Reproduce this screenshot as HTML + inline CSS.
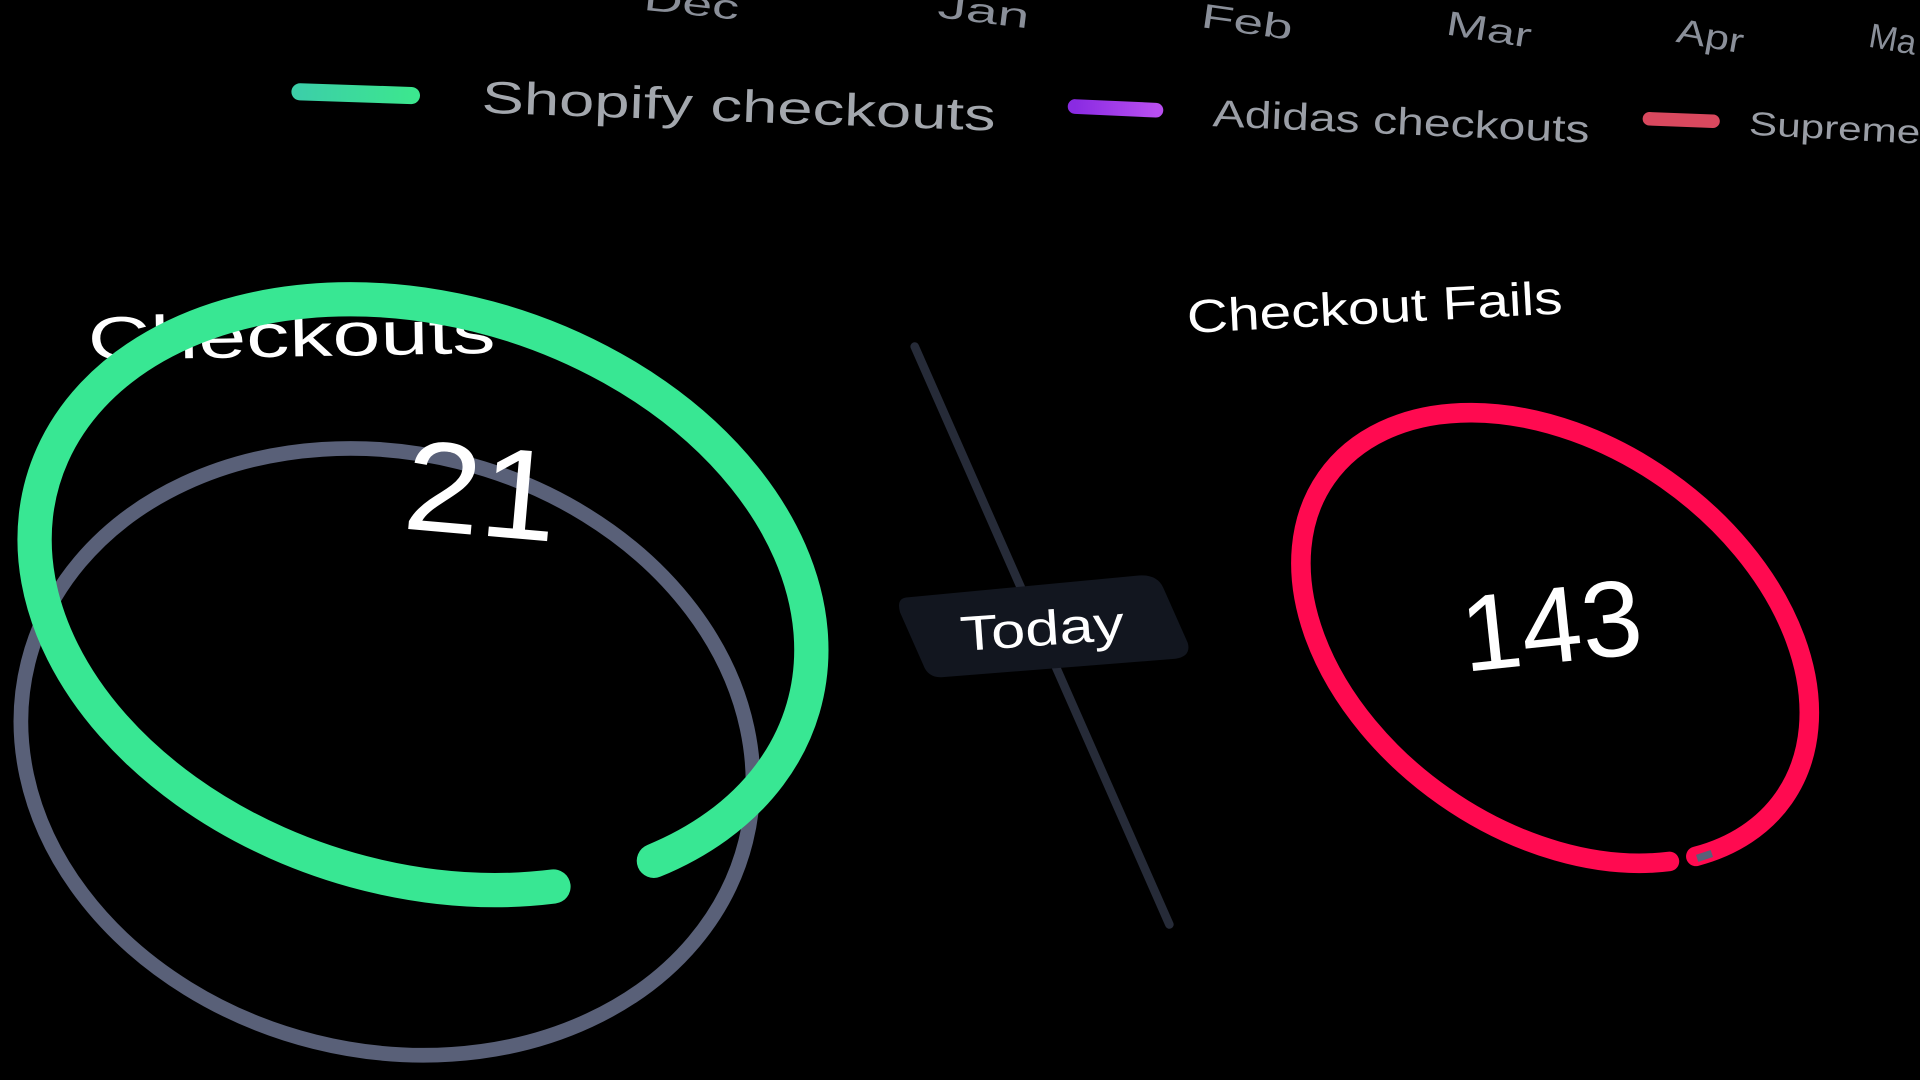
<!DOCTYPE html>
<html><head><meta charset="utf-8"><style>
html,body{margin:0;padding:0;background:#000;width:1920px;height:1080px;overflow:hidden}
svg{display:block}
text{font-family:"Liberation Sans",sans-serif}
</style></head><body>
<svg width="1920" height="1080" viewBox="0 0 1568 882" xmlns="http://www.w3.org/2000/svg">
<defs>
<linearGradient id="gg" x1="0" x2="1"><stop offset="0" stop-color="#3ccfa8"/><stop offset="1" stop-color="#3ce68f"/></linearGradient>
<linearGradient id="pg" x1="0" x2="1"><stop offset="0" stop-color="#8a2be2"/><stop offset="1" stop-color="#b84ef0"/></linearGradient>
</defs>
<rect width="1568" height="882" fill="#000"/>
<g fill="#8a8f99" font-size="28">
<text x="525" y="8" textLength="78" lengthAdjust="spacingAndGlyphs" transform="rotate(6 525 8)">Dec</text>
<text x="765" y="14" textLength="75" lengthAdjust="spacingAndGlyphs" transform="rotate(7 765 14)">Jan</text>
<text x="980" y="22" textLength="75" lengthAdjust="spacingAndGlyphs" transform="rotate(8 980 22)">Feb</text>
<text x="1180" y="28" textLength="70" lengthAdjust="spacingAndGlyphs" transform="rotate(9 1180 28)">Mar</text>
<text x="1368" y="34" textLength="55" lengthAdjust="spacingAndGlyphs" transform="rotate(10 1368 34)">Apr</text>
<text x="1525" y="38" transform="rotate(10 1525 38)">Ma</text>
</g>
<line x1="245" y1="75" x2="336" y2="78" stroke="url(#gg)" stroke-width="14" stroke-linecap="round"/>
<text x="393" y="92" fill="#a3a7ad" font-size="37" textLength="420" lengthAdjust="spacingAndGlyphs" transform="rotate(2 393 92)">Shopify checkouts</text>
<line x1="878" y1="87" x2="944" y2="90" stroke="url(#pg)" stroke-width="12" stroke-linecap="round"/>
<text x="990" y="103" fill="#9a9ea6" font-size="31" textLength="308" lengthAdjust="spacingAndGlyphs" transform="rotate(2.5 990 103)">Adidas checkouts</text>
<line x1="1347" y1="97" x2="1399" y2="99" stroke="#d9485e" stroke-width="11" stroke-linecap="round"/>
<text x="1428" y="110" fill="#9a9ea6" font-size="27" textLength="140" lengthAdjust="spacingAndGlyphs" transform="rotate(3 1428 110)">Supreme</text>
<ellipse cx="316" cy="614" rx="302" ry="244" transform="rotate(14 316 614)" fill="none" stroke="#596078" stroke-width="12"/>
<text x="72" y="294" fill="#fff" font-size="50" textLength="333" lengthAdjust="spacingAndGlyphs" transform="rotate(-1 72 294)">Checkouts</text>
<path d="M 534 703 A 324 232 17 1 0 452 724" fill="none" stroke="#38e793" stroke-width="28" stroke-linecap="round"/>
<text x="390" y="437" fill="#fff" font-size="105" text-anchor="middle" textLength="125" lengthAdjust="spacingAndGlyphs" transform="rotate(5 390 437)">21</text>
<line x1="747" y1="283" x2="955" y2="755" stroke="#262b38" stroke-width="7" stroke-linecap="round"/>
<path d="M 740 488 L 930 470 Q 945 469 950 480 L 970 525 Q 973 536 960 538 L 770 553 Q 758 554 754 543 L 735 500 Q 732 489 740 488 Z" fill="#12161f"/>
<text x="852" y="527" fill="#fff" font-size="40" text-anchor="middle" textLength="134" lengthAdjust="spacingAndGlyphs" transform="rotate(-4 852 527)">Today</text>
<text x="970" y="272" fill="#fff" font-size="38" textLength="307" lengthAdjust="spacingAndGlyphs" transform="rotate(-3 970 272)">Checkout Fails</text>
<ellipse cx="1270" cy="521" rx="228" ry="158" transform="rotate(35 1270 521)" fill="none" stroke="#ff0a50" stroke-width="16" stroke-linecap="round" pathLength="1000" stroke-dasharray="72 18 910"/>
<line x1="1386" y1="701" x2="1398" y2="697" stroke="#596078" stroke-width="6"/>
<text x="1270" y="541" fill="#fff" font-size="88" text-anchor="middle" textLength="148" lengthAdjust="spacingAndGlyphs" transform="rotate(-6 1270 541)">143</text>
</svg>
</body></html>
